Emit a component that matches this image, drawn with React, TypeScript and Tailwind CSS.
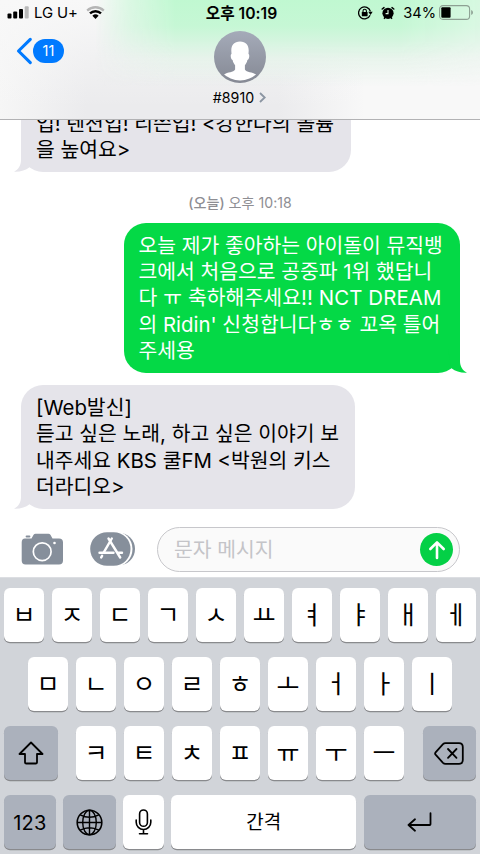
import type { ReactNode } from 'react';
import clsx from 'clsx';

type Line = { text: string; className?: string };

const previous: Line[] = [
  { text: '업! 텐션업! 리쓴업! <강한나의 볼륨' },
  { text: '을 높여요>' },
];

const sent: Line[] = [
  { text: '오늘 제가 좋아하는 아이돌이 뮤직뱅' },
  { text: '크에서 처음으로 공중파 1위 했답니' },
  { text: '다 ㅠ 축하해주세요!! NCT DREAM', className: 'tracking-[0.1px]' },
  { text: "의 Ridin' 신청합니다ㅎㅎ 꼬옥 틀어" },
  { text: '주세용' },
];

const reply: Line[] = [
  { text: '[Web발신]' },
  { text: '듣고 싶은 노래, 하고 싶은 이야기 보' },
  { text: '내주세요 KBS 쿨FM <박원의 키스' },
  { text: '더라디오>' },
];

const rowOne = ['ㅂ', 'ㅈ', 'ㄷ', 'ㄱ', 'ㅅ', 'ㅛ', 'ㅕ', 'ㅑ', 'ㅐ', 'ㅔ'];
const rowTwo = ['ㅁ', 'ㄴ', 'ㅇ', 'ㄹ', 'ㅎ', 'ㅗ', 'ㅓ', 'ㅏ', 'ㅣ'];
const rowThree = ['ㅋ', 'ㅌ', 'ㅊ', 'ㅍ', 'ㅠ', 'ㅜ', 'ㅡ'];

function StatusBar() {
  return (
    <div className="grid h-[26px] grid-cols-[1fr_auto_1fr] items-center pl-[7px] pr-[6px]">
      <div className="flex items-center">
        <svg width="22" height="13" viewBox="0 0 22 13">
          <rect x="0.5" y="7.5" width="4" height="5" rx="1" />
          <rect x="6.2" y="5.5" width="4" height="7" rx="1" />
          <rect x="12" y="3" width="4" height="9.5" rx="1" />
          <rect x="17.7" y="0.3" width="4" height="12.2" rx="1" fill="#b9b9b9" />
        </svg>
        <span className="ml-[5px] pt-px text-[14.9px] tracking-[-0.1px]">LG U+</span>
        <svg className="ml-[8px]" width="19" height="14" viewBox="0 0 19 14" fill="none">
          <path d="M1.2 4.6A12 12 0 0 1 17.8 4.6" stroke="#b5b5b5" strokeWidth="2.3" />
          <path d="M4 7.4A8 8 0 0 1 15 7.4" stroke="#000" strokeWidth="2.4" />
          <path d="M9.5 13L6.4 9.8A4.5 4.5 0 0 1 12.6 9.8Z" fill="#000" />
        </svg>
      </div>
      <span className="pt-px pl-[2px] text-[15.7px] font-semibold">오후 10:19</span>
      <div className="flex items-center justify-end">
        <svg width="15" height="14" viewBox="0 0 15 14" fill="none">
          <path d="M12.1 9.2A6 6 0 1 1 12.4 5.4" stroke="#000" strokeWidth="1.3" />
          <path d="M10.3 5.8H14.7L12.5 9Z" fill="#000" />
          <rect x="3.8" y="6" width="5.8" height="4.3" rx="0.6" fill="#000" />
          <path d="M5 6.2V5A1.7 1.7 0 0 1 8.4 5V6.2" stroke="#000" strokeWidth="1.1" />
        </svg>
        <svg className="ml-[8px]" width="14" height="14" viewBox="0 0 14 14" fill="none">
          <circle cx="7" cy="7.3" r="5.6" fill="#000" />
          <path d="M1.2 3L3 1.6M12.8 3L11 1.6" stroke="#000" strokeWidth="1.5" strokeLinecap="round" />
          <path d="M3 12.8L4 11.5M11 12.8L10 11.5" stroke="#000" strokeWidth="1.4" />
          <path d="M7 4.1V7.6H4.6" stroke="#e0fae6" strokeWidth="1.1" />
        </svg>
        <span className="ml-[8px] pt-px text-[14.6px]">34%</span>
        <svg className="ml-[3px]" width="35" height="15" viewBox="0 0 35 15" fill="none">
          <rect x="0.6" y="0.6" width="30" height="13.8" rx="3.4" stroke="#8da093" strokeWidth="1.1" />
          <rect x="2.3" y="2.3" width="9.3" height="10.4" rx="1" fill="#000" />
          <path d="M32.2 5V10Q34 9.2 34 7.5Q34 5.8 32.2 5Z" fill="#8da093" />
        </svg>
      </div>
    </div>
  );
}

function Header() {
  return (
    <header className="relative isolate z-10 h-[120px] shrink-0 border-b border-[#b2b2b4] bg-[#f8f8f8] bg-[linear-gradient(to_right,#f6f6f6_0%,#ebebed_18%,#ebebed_58%,#f8f8f8_76%)]">
      {/* colours of the bubbles scrolled under the translucent bar */}
      <div className="absolute inset-0 -z-10 bg-[linear-gradient(to_bottom,#f8f8f8_0%,#f8f8f800_90%)]" />
      <div className="absolute inset-0 -z-10 bg-[linear-gradient(to_bottom,#c0f8d1_0px,#c6f7d5_26px,#d6f5e0_42px,#e4f3e9cc_58px,#ecefee00_86px)] [mask-image:linear-gradient(to_right,transparent_95px,#0008_130px,#000_175px,#000_400px,#0009_480px)]" />
      <StatusBar />
      <div className="grid grid-cols-[1fr_auto_1fr] items-start px-[16px] pt-[4.5px]">
        <div className="flex items-center pt-[6.5px]">
          <svg width="17" height="28" viewBox="0 0 17 28" fill="none">
            <path d="M14.3 2.3L2.5 14L14.3 25.7" stroke="#007aff" strokeWidth="3.1" strokeLinecap="round" strokeLinejoin="round" />
          </svg>
          <span className="flex h-[24px] w-[31px] items-center justify-center rounded-full bg-[#007aff] text-[14.5px] text-white">
            11
          </span>
        </div>
        <div className="flex flex-col items-center">
          <svg width="52" height="52" viewBox="0 0 52 52">
            <defs>
              <linearGradient id="avatar" x1="0" y1="0" x2="0" y2="1">
                <stop offset="0" stopColor="#a5abb9" />
                <stop offset="1" stopColor="#858994" />
              </linearGradient>
              <clipPath id="avatar-clip">
                <circle cx="26" cy="25" r="24.4" />
              </clipPath>
            </defs>
            <circle cx="26" cy="26" r="26" fill="url(#avatar)" />
            <path
              clipPath="url(#avatar-clip)"
              fill="#fff"
              d="M26 10.4C20 10.4 17.2 14.2 17.3 19.5L17.5 23C16.2 23.1 16.5 28.5 18.6 29C19 31.5 20.2 33 21.1 34.2V38.5C19.5 41.5 13.5 41 10 43.5V52H42V43.5C38.5 41 32.5 41.5 30.9 38.5V34.2C31.8 33 33 31.5 33.4 29C35.5 28.5 35.8 23.1 34.5 23L34.7 19.5C34.8 14.2 32 10.4 26 10.4Z"
            />
          </svg>
          <div className="mt-[5px] flex items-center gap-[5px] pr-px text-[14.2px] leading-[20px]">
            <span>#8910</span>
            <svg width="7" height="11" viewBox="0 0 7 11" fill="none">
              <path d="M1 1L5.7 5.5L1 10" stroke="#8b95a2" strokeWidth="1.8" />
            </svg>
          </div>
        </div>
      </div>
    </header>
  );
}

function Bubble({ lines, mine, className }: { lines: Line[]; mine?: boolean; className: string }) {
  return (
    <div
      className={clsx(
        'relative rounded-[22px] text-[20.4px] leading-[26.4px] whitespace-nowrap',
        mine ? 'bg-[#04d946] text-white' : 'bg-[#e5e4ea] text-black',
        className
      )}
    >
      {lines.map((line) => (
        <p key={line.text} className={line.className}>
          {line.text}
        </p>
      ))}
      <svg
        className={clsx('absolute bottom-0', mine ? 'right-[-8px] -scale-x-100' : 'left-[-8px]')}
        width="24"
        height="24"
        viewBox="0 0 24 24"
      >
        <path
          d="M8 0V12C8 17.5 5.5 21.5 1 23.7C7 24 12.5 22.5 16.5 19.3L20 0Z"
          fill={mine ? '#04d946' : '#e5e4ea'}
        />
      </svg>
    </div>
  );
}

function Composer() {
  return (
    <div className="flex h-[50px] shrink-0 items-start pl-[21px]">
      <svg className="mt-[6px]" width="42" height="32" viewBox="0 0 42 32" fill="none">
        <path d="M4 5.6H10.5L12.6 1.8Q13.3 0.7 14.5 0.7H27.5Q28.7 0.7 29.4 1.8L31.5 5.6H38Q42 5.6 42 9.5V27.5Q42 31.4 38 31.4H4.6Q0.7 31.4 0.7 27.5V9.5Q0.7 5.6 4 5.6Z" fill="#868f9b" />
        <rect x="4.6" y="2.5" width="4.8" height="2" rx="1" fill="#868f9b" />
        <circle cx="21.2" cy="18.7" r="8.9" stroke="#fff" strokeWidth="1.7" />
        <circle cx="33.5" cy="10" r="1.3" fill="#fff" />
      </svg>
      <svg className="ml-[26px] mt-[4px]" width="47" height="36" viewBox="0 0 47 36" fill="none">
        <rect x="8" y="1.7" width="38" height="32.6" rx="16.3" fill="#868f9b" />
        <rect x="0.5" y="0" width="43" height="36" rx="18" fill="#fff" />
        <rect x="1.2" y="1.2" width="40.3" height="33.6" rx="16.8" fill="#868f9b" />
        <g stroke="#fff" strokeWidth="2.4" strokeLinecap="round">
          <path d="M19.5 7.5L31.2 26.5" />
          <path d="M22.8 7.5L14.5 21.8" />
          <path d="M10.5 21.8H24.5M29.5 21.8H33" />
          <path d="M13.1 24.8L12.2 26.4" />
        </g>
      </svg>
      <div className="ml-[21px] flex h-[45px] w-[302.5px] items-center justify-between rounded-full border-[1.5px] border-[#c7c7cb] bg-[#fafafa] pl-[16px] pr-[5.5px]">
        <span className="pt-[2px] text-[20.4px] text-[#c4c4c8]">문자 메시지</span>
        <span className="flex size-[33px] items-center justify-center rounded-full bg-[#04d046]">
          <svg width="18" height="20" viewBox="0 0 18 20" fill="none">
            <path d="M9 18V2.5M2.3 9L9 2.3L15.7 9" stroke="#fff" strokeWidth="2.6" strokeLinecap="round" strokeLinejoin="round" />
          </svg>
        </span>
      </div>
    </div>
  );
}

function Key({ children, className, dark }: { children: ReactNode; className?: string; dark?: boolean }) {
  return (
    <div
      className={clsx(
        'flex h-[54px] shrink-0 items-center justify-center rounded-[6px] shadow-[0_1.3px_0_#898a8d]',
        dark ? 'bg-[#abb1bc]' : 'bg-white',
        className ?? 'w-[40.5px]'
      )}
    >
      {children}
    </div>
  );
}

function Letters({ keys }: { keys: string[] }) {
  return (
    <div className="flex gap-[7.5px]">
      {keys.map((letter) => (
        <Key key={letter}>
          <span className="text-[25px] leading-[24px]">{letter}</span>
        </Key>
      ))}
    </div>
  );
}

function Keyboard() {
  return (
    <div className="flex h-[277px] shrink-0 flex-col gap-[15px] border-t border-[#dcdee2] bg-[#d1d4d9] pt-[10px]">
      <div className="flex justify-center">
        <Letters keys={rowOne} />
      </div>
      <div className="flex justify-center">
        <Letters keys={rowTwo} />
      </div>
      <div className="flex justify-between px-[4px]">
        <Key dark className="w-[53.5px]">
          <svg width="26" height="24" viewBox="0 0 26 24" fill="none">
            <path d="M13 1.5L24.5 13H19V21.2Q19 22.5 17.7 22.5H8.3Q7 22.5 7 21.2V13H1.5Z" stroke="#000" strokeWidth="1.8" strokeLinejoin="round" />
          </svg>
        </Key>
        <Letters keys={rowThree} />
        <Key dark className="w-[53.5px]">
          <svg width="30" height="23" viewBox="0 0 30 23" fill="none">
            <path d="M11.5 1.2H25Q28.8 1.2 28.8 5V18Q28.8 21.8 25 21.8H11.5Q10 21.8 9 20.8L1.6 12.7Q0.6 11.5 1.6 10.3L9 2.2Q10 1.2 11.5 1.2Z" stroke="#000" strokeWidth="1.8" />
            <path d="M14 7L22.5 15.8M22.5 7L14 15.8" stroke="#000" strokeWidth="1.8" strokeLinecap="round" />
          </svg>
        </Key>
      </div>
      <div className="flex gap-[7.5px] px-[4px]">
        <Key dark className="w-[51.7px]">
          <span className="pt-px text-[20px] tracking-[0.2px]">123</span>
        </Key>
        <Key dark className="w-[52.5px]">
          <svg width="27" height="27" viewBox="0 0 27 27" fill="none" stroke="#000" strokeWidth="1.4">
            <circle cx="13.5" cy="13.5" r="12.3" strokeWidth="1.6" />
            <ellipse cx="13.5" cy="13.5" rx="6.8" ry="12.3" />
            <path d="M13.5 1.2V25.8M1.2 13.5H25.8M4.2 5.8Q13.5 10.8 22.8 5.8M4.2 21.2Q13.5 16.2 22.8 21.2" />
          </svg>
        </Key>
        <Key>
          <svg width="17" height="26" viewBox="0 0 17 26" fill="none" stroke="#000" strokeWidth="1.6" strokeLinecap="round">
            <rect x="4.6" y="1" width="7.8" height="16.3" rx="3.9" />
            <path d="M1.2 11V13.2A7.3 7.3 0 0 0 15.8 13.2V11M8.5 20.5V24.6M4.5 24.7H12.5" />
          </svg>
        </Key>
        <Key className="w-[185px]">
          <span className="pt-[2px] text-[19px]">간격</span>
        </Key>
        <Key dark className="w-[112px]">
          <svg width="25" height="20" viewBox="0 0 25 20" fill="none" stroke="#000" strokeWidth="1.8" strokeLinecap="round" strokeLinejoin="round">
            <path d="M23.5 1.2V12.2Q23.5 13 22.7 13H1.5M8 7.3L1.5 13L8 18.7" />
          </svg>
        </Key>
      </div>
    </div>
  );
}

export default function App() {
  return (
    <div className="flex h-[854px] w-[480px] flex-col overflow-hidden bg-white font-['Inter','Noto_Sans_CJK_KR',sans-serif] text-black">
      <Header />
      <main className="flex h-[407px] shrink-0 flex-col items-start overflow-hidden">
        <Bubble lines={previous} className="mt-[-22px] ml-[21px] h-[74px] w-[330px] shrink-0 pt-[13px] pl-[15px]" />
        <p className="mt-[21px] w-full text-center text-[14.1px] leading-[20px] text-[#8e8e93]">
          <span className="font-medium">(오늘)</span> 오후 10:18
        </p>
        <Bubble lines={sent} mine className="mt-[10px] ml-[123.5px] h-[150px] w-[336px] shrink-0 pt-[9.5px] pl-[15px]" />
        <Bubble lines={reply} className="mt-[12px] ml-[21px] h-[123.5px] w-[333.5px] shrink-0 pt-[10px] pl-[15px]" />
      </main>
      <Composer />
      <Keyboard />
    </div>
  );
}
